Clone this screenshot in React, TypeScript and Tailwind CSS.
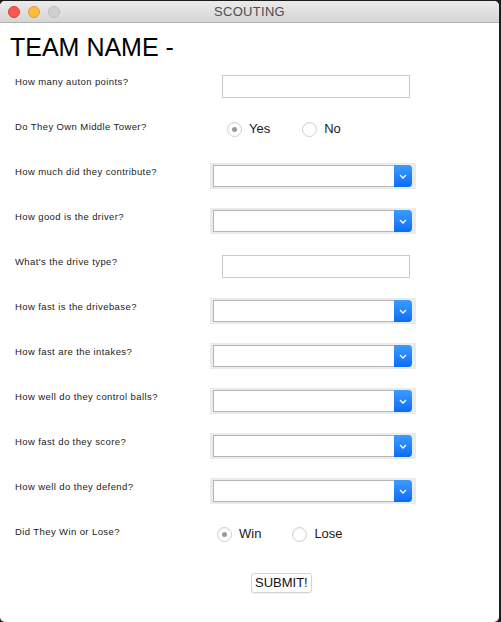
import React from 'react';

const font = { fontFamily: '"Liberation Sans", Arial, sans-serif' };

type Row =
  | { kind: 'text'; label: string }
  | { kind: 'combo'; label: string }
  | { kind: 'radio'; label: string; options: [string, string]; wide?: boolean };

const rows: Row[] = [
  { kind: 'text', label: 'How many auton points?' },
  { kind: 'radio', label: 'Do They Own Middle Tower?', options: ['Yes', 'No'] },
  { kind: 'combo', label: 'How much did they contribute?' },
  { kind: 'combo', label: 'How good is the driver?' },
  { kind: 'text', label: "What's the drive type?" },
  { kind: 'combo', label: 'How fast is the drivebase?' },
  { kind: 'combo', label: 'How fast are the intakes?' },
  { kind: 'combo', label: 'How well do they control balls?' },
  { kind: 'combo', label: 'How fast do they score?' },
  { kind: 'combo', label: 'How well do they defend?' },
  { kind: 'radio', label: 'Did They Win or Lose?', options: ['Win', 'Lose'], wide: true },
];

const Combo: React.FC = () => (
  <div className="ml-[10px] w-[206px] h-[26px] bg-[#ebebeb] pt-[2px] pl-[3px]">
    <div className="flex h-[22px] w-[199px] rounded-r-[4px] bg-white border border-[#b5b5b5] border-r-0">
      <div className="flex-1" />
      <div className="-my-px w-[18px] rounded-r-[4px] bg-gradient-to-b from-[#3c9bff] to-[#0a6cf5] flex items-center justify-center">
        <svg width="8" height="5" viewBox="0 0 8 5">
          <path d="M1 1 L4 4 L7 1" stroke="#fff" strokeWidth="1.3" fill="none" />
        </svg>
      </div>
    </div>
  </div>
);

const TextBox: React.FC = () => (
  <div className="ml-[22px] mt-[2px] w-[188px] h-[23px] border border-[#c9c9c9] bg-white" />
);

const Radio: React.FC<{ label: string; checked?: boolean }> = ({ label, checked }) => (
  <div className="flex items-center gap-[7px]">
    <div className="w-[15px] h-[15px] rounded-full border border-[#cfcfcf] bg-white flex items-center justify-center shadow-[inset_0_1px_1px_rgba(0,0,0,0.05)]">
      {checked && <div className="w-[5px] h-[5px] rounded-full bg-[#9a9a9a]" />}
    </div>
    <span className="text-[13px] leading-[20px] text-[#1a1a1a]">{label}</span>
  </div>
);

export default function App() {
  return (
    <div className="w-[501px] h-[622px] bg-[#1c1c1c] pt-[1px] overflow-hidden" style={font}>
      <div className="w-[499px] h-[621px] bg-white rounded-t-[5px] rounded-b-[5px] overflow-hidden flex flex-col">
        <div className="relative h-[22px] shrink-0 bg-gradient-to-b from-[#ebebeb] to-[#d5d5d5] border-b border-[#b1b1b1] flex items-center justify-center">
          <div className="absolute left-[8px] top-[5px] flex gap-[8px]">
            <div className="w-[12px] h-[12px] rounded-full bg-[#fc5753] border border-[#df3d39]" />
            <div className="w-[12px] h-[12px] rounded-full bg-[#fdbc40] border border-[#de9f33]" />
            <div className="w-[12px] h-[12px] rounded-full bg-[#d0d0d0] border border-[#bdbdbd]" />
          </div>
          <span className="text-[13px] leading-[16px] pt-[1px] text-[#4d4d4d] tracking-[0.3px]">SCOUTING</span>
        </div>

        <div className="h-[50px] shrink-0 pl-[10px] pt-[9px]">
          <h1 className="text-[25px] leading-[30px] text-black">TEAM NAME -</h1>
        </div>

        {rows.map((row, i) => (
          <div key={i} className="flex items-start h-[45px] shrink-0">
            <div className="w-[200px] pl-[15px] pt-[3px] text-[9.5px] leading-[11px] tracking-[0.4px] text-[#222]">
              {row.label}
            </div>
            {row.kind === 'text' && <TextBox />}
            {row.kind === 'combo' && <Combo />}
            {row.kind === 'radio' && (
              <div className={`flex items-start pt-[1px] ${row.wide ? 'ml-[17px] gap-[31px]' : 'ml-[27px] gap-[32px]'}`}>
                <Radio label={row.options[0]} checked />
                <Radio label={row.options[1]} />
              </div>
            )}
          </div>
        ))}

        <div className="flex pt-[5px] pl-[251px]">
          <button className="h-[20px] px-[3px] rounded-[3px] border border-[#d4d4d4] bg-white text-[13px] leading-[16px] text-[#111] shadow-[0_1px_0_rgba(0,0,0,0.05)]">
            SUBMIT!
          </button>
        </div>
      </div>
    </div>
  );
}
